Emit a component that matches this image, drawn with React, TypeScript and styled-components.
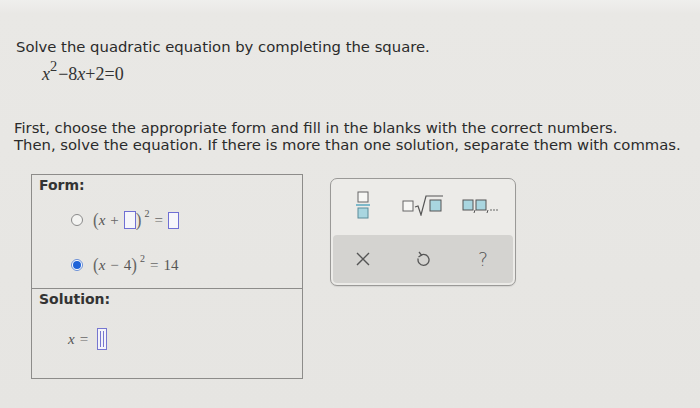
import styled, { createGlobalStyle } from "styled-components";

const GlobalStyle = createGlobalStyle`
  html, body {
    margin: 0;
    padding: 0;
    background: #e7e6e3;
  }
  body {
    font-family: "DejaVu Sans", Verdana, sans-serif;
    color: #2f2f2f;
  }
`;

const Page = styled.div`
  width: 700px;
  height: 408px;
  box-sizing: border-box;
  padding: 37px 0 0 16px;
  background: linear-gradient(#efefed 0px, #e9e8e5 14px, #e6e5e2 100%);
  overflow: hidden;
`;

const Prompt = styled.p`
  margin: 0;
  font-size: 14.8px;
  line-height: 19px;
  color: #2b2b2b;
`;

const Equation = styled.div`
  margin: 7px 0 0 26px;
  font-family: "Liberation Serif", "Times New Roman", serif;
  font-size: 18px;
  line-height: 22px;
  color: #333;
`;

const Var = styled.i`
  font-style: italic;
`;

const Sup = styled.sup`
  font-size: 0.8em;
  vertical-align: 0.6em;
  line-height: 0;
  margin-left: 0;
  margin-right: 1px;
`;

const Instructions = styled(Prompt)`
  margin-top: 34px;
  line-height: 17px;
  margin-left: -2px;
`;

const WorkArea = styled.div`
  display: flex;
  align-items: flex-start;
  gap: 27px;
  margin: 21px 0 0 15px;
`;

const FormBox = styled.div`
  width: 272px;
  border: 1px solid #8d8c8a;
  box-sizing: border-box;
`;

const Section = styled.div<{ $h: number }>`
  height: ${(p) => p.$h}px;
  box-sizing: border-box;
  padding: 1px 7px 0;
  & + & {
    border-top: 1px solid #8d8c8a;
  }
`;

const Label = styled.div`
  font-size: 14px;
  font-weight: bold;
  color: #333;
  line-height: 18px;
`;

const Options = styled.div`
  display: flex;
  flex-direction: column;
  gap: 21px;
  margin: 14px 0 0 32px;
`;

const Option = styled.div`
  display: flex;
  align-items: center;
  height: 24px;
  gap: 10px;
`;

const Radio = styled.span<{ $checked?: boolean }>`
  width: 12px;
  height: 12px;
  border-radius: 50%;
  box-sizing: border-box;
  border: 1px solid ${(p) => (p.$checked ? "#6a8fd6" : "#8a8a8a")};
  background: ${(p) => (p.$checked ? "#fff" : "#f4f4f2")};
  display: flex;
  align-items: center;
  justify-content: center;
  &::after {
    content: "";
    display: ${(p) => (p.$checked ? "block" : "none")};
    width: 8px;
    height: 8px;
    border-radius: 50%;
    background: #1f63d8;
  }
`;

const Expr = styled.span`
  display: flex;
  align-items: center;
  font-family: "Liberation Serif", "Times New Roman", serif;
  font-size: 15px;
  color: #555;
  white-space: pre;
`;

const Paren = styled.span`
  font-size: 17px;
  color: #666;
  transform: scaleY(1.15);
`;

const Op = styled.span`
  margin: 0 5px;
  color: #666;
`;

const SmallSup = styled.span`
  font-size: 10px;
  align-self: flex-start;
  margin: -2px 0 0 3px;
  color: #555;
`;

const Blank = styled.span<{ $w?: number; $h?: number }>`
  display: inline-block;
  width: ${(p) => p.$w ?? 10}px;
  height: ${(p) => p.$h ?? 16}px;
  border: 1.5px solid #6f6fd4;
  box-sizing: border-box;
  background: #f6f6fb;
`;

const SolutionRow = styled.div`
  display: flex;
  align-items: center;
  margin: 20px 0 0 29px;
  font-family: "Liberation Serif", "Times New Roman", serif;
  font-size: 15px;
  color: #555;
`;

const CursorBlank = styled.span`
  position: relative;
  width: 10px;
  height: 22px;
  border: 1.5px solid #7676d0;
  box-sizing: border-box;
  margin-left: 4px;
  background: #f4f4fa;
  &::after {
    content: "";
    position: absolute;
    left: 2px;
    right: 2px;
    top: 2px;
    bottom: 2px;
    border-left: 1px solid #7676d0;
    border-right: 1px solid #7676d0;
  }
`;

const Keypad = styled.div`
  width: 186px;
  height: 108px;
  margin-top: 4px;
  border: 1px solid #9a9997;
  border-radius: 7px;
  box-sizing: border-box;
  background: #ecebe8;
  padding: 2px;
  display: flex;
  flex-direction: column;
  box-shadow: 0 1px 1px rgba(0, 0, 0, 0.08);
`;

const KeyRow = styled.div<{ $shaded?: boolean }>`
  flex: 1;
  display: grid;
  grid-template-columns: repeat(3, 1fr);
  align-items: center;
  justify-items: center;
  border-radius: 4px;
  background: ${(p) => (p.$shaded ? "#d4d3d0" : "transparent")};
  & + & {
    margin-top: 6px;
  }
`;

const Key = styled.span`
  display: flex;
  align-items: center;
  justify-content: center;
  color: #555;
`;

const FracIcon = () => (
  <svg width="14" height="28" viewBox="0 0 14 28">
    <rect x="2" y="1" width="10" height="10" fill="#f7f7f5" stroke="#666" strokeWidth="1" />
    <line x1="0" y1="14" x2="14" y2="14" stroke="#5aa8c0" strokeWidth="1.5" />
    <rect x="2" y="17" width="10" height="10" fill="#a9d6e0" stroke="#5b8c99" strokeWidth="1" />
  </svg>
);

const RootIcon = () => (
  <svg width="42" height="22" viewBox="0 0 42 22">
    <rect x="1" y="7" width="10" height="10" fill="#f7f7f5" stroke="#666" strokeWidth="1" />
    <path d="M13 13 L16 12 L19 21 L24 2 L41 2" fill="none" stroke="#555" strokeWidth="1.2" />
    <rect x="28" y="6" width="11" height="11" fill="#a9d6e0" stroke="#555" strokeWidth="1" />
  </svg>
);

const ListIcon = () => (
  <svg width="42" height="16" viewBox="0 0 42 16">
    <rect x="1" y="3" width="10" height="10" fill="#a9d6e0" stroke="#555" strokeWidth="1" />
    <path d="M13 13 L12 16" stroke="#555" strokeWidth="1" />
    <rect x="14" y="3" width="10" height="10" fill="#a9d6e0" stroke="#555" strokeWidth="1" />
    <path d="M26 13 L25 16" stroke="#555" strokeWidth="1" />
    <circle cx="29" cy="13" r="0.8" fill="#555" />
    <circle cx="32" cy="13" r="0.8" fill="#555" />
    <circle cx="35" cy="13" r="0.8" fill="#555" />
  </svg>
);

const CloseIcon = () => (
  <svg width="14" height="14" viewBox="0 0 14 14">
    <path d="M1 1 L13 13 M13 1 L1 13" stroke="#555" strokeWidth="1.4" fill="none" />
  </svg>
);

const UndoIcon = () => (
  <svg width="14" height="16" viewBox="0 0 14 16">
    <path d="M5 4 A5.5 5.5 0 1 1 2.2 7.5" fill="none" stroke="#555" strokeWidth="1.3" />
    <path d="M3 1 L5.5 4 L2.5 6" fill="none" stroke="#555" strokeWidth="1.3" />
  </svg>
);

const HelpText = styled.span`
  font-family: "DejaVu Sans", sans-serif;
  font-size: 19px;
  color: #555;
  font-weight: 300;
`;

export default function App() {
  return (
    <>
      <GlobalStyle />
      <Page>
        <Prompt>Solve the quadratic equation by completing the square.</Prompt>
        <Equation>
          <Var>x</Var>
          <Sup>2</Sup>−8<Var>x</Var>+2=0
        </Equation>
        <Instructions>
          First, choose the appropriate form and fill in the blanks with the correct numbers.
          <br />
          Then, solve the equation. If there is more than one solution, separate them with commas.
        </Instructions>
        <WorkArea>
          <FormBox>
            <Section $h={113}>
              <Label>Form:</Label>
              <Options>
                <Option>
                  <Radio />
                  <Expr>
                    <Paren>(</Paren>
                    <Var>x</Var>
                    <Op>+</Op>
                    <Blank $w={12} $h={18} />
                    <Paren>)</Paren>
                    <SmallSup>2</SmallSup>
                    <Op>=</Op>
                    <Blank $w={11} $h={17} />
                  </Expr>
                </Option>
                <Option>
                  <Radio $checked />
                  <Expr>
                    <Paren>(</Paren>
                    <Var>x</Var>
                    <Op>−</Op>4
                    <Paren>)</Paren>
                    <SmallSup>2</SmallSup>
                    <Op>=</Op>14
                  </Expr>
                </Option>
              </Options>
            </Section>
            <Section $h={90}>
              <Label>Solution:</Label>
              <SolutionRow>
                <Var>x</Var>
                <Op>=</Op>
                <CursorBlank />
              </SolutionRow>
            </Section>
          </FormBox>
          <Keypad>
            <KeyRow>
              <Key><FracIcon /></Key>
              <Key><RootIcon /></Key>
              <Key><ListIcon /></Key>
            </KeyRow>
            <KeyRow $shaded>
              <Key><CloseIcon /></Key>
              <Key><UndoIcon /></Key>
              <Key><HelpText>?</HelpText></Key>
            </KeyRow>
          </Keypad>
        </WorkArea>
      </Page>
    </>
  );
}
